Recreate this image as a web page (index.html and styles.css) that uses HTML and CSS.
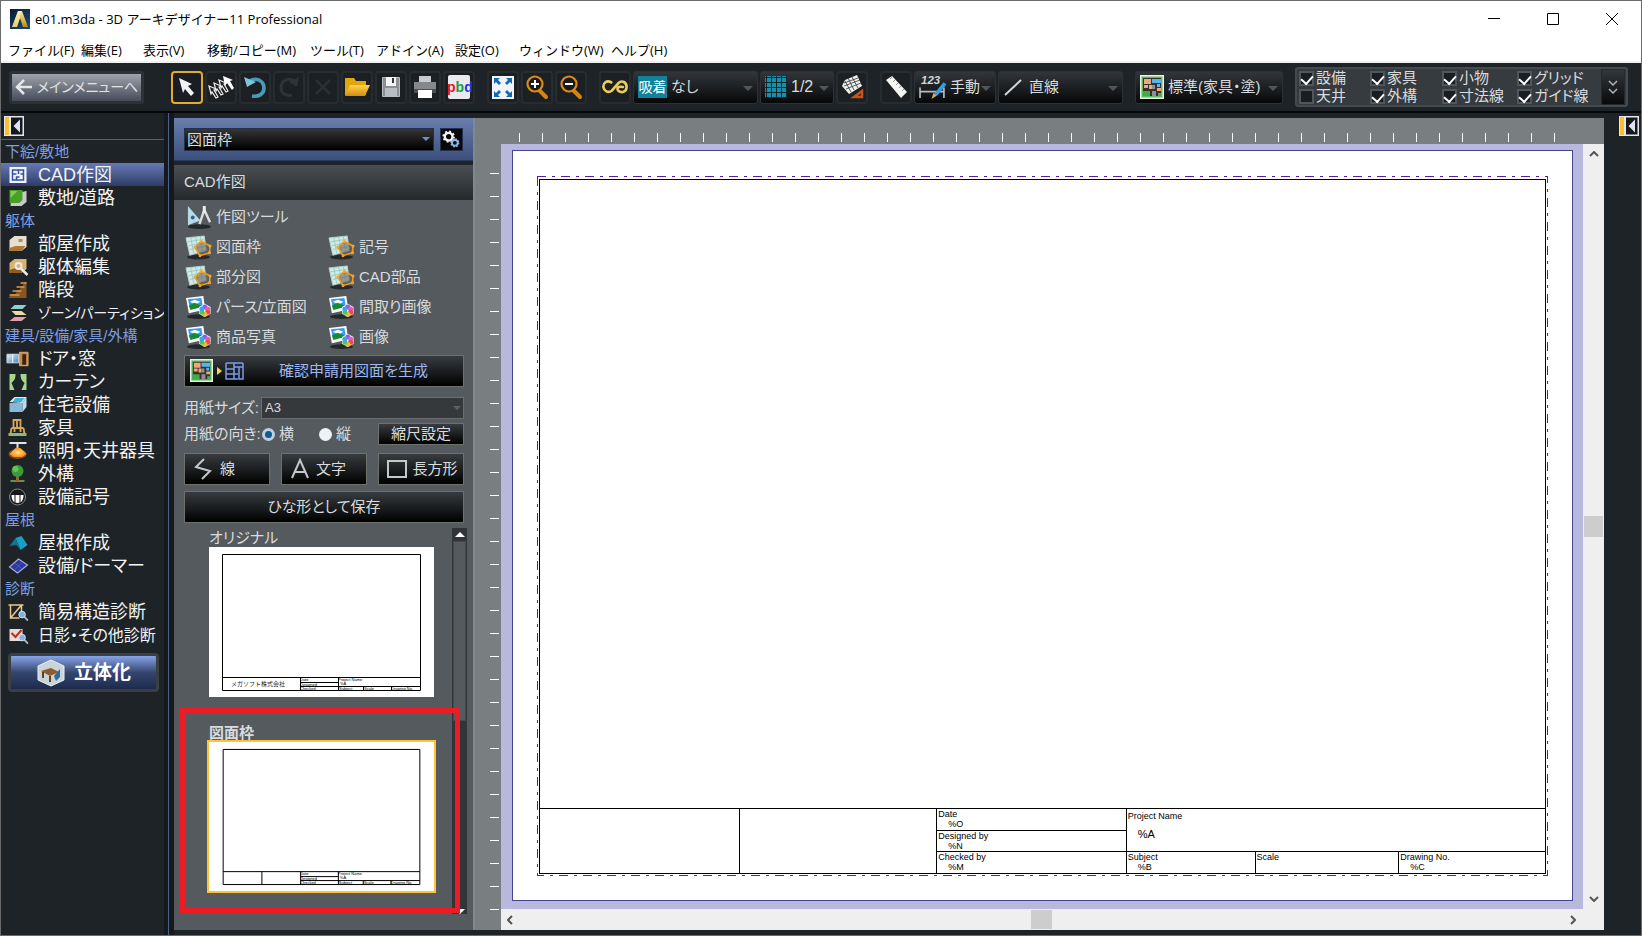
FILE: index.html
```html
<!DOCTYPE html>
<html lang="ja">
<head>
<meta charset="utf-8">
<title>e01.m3da - 3D アーキデザイナー11 Professional</title>
<link rel="stylesheet" href="styles.css">
</head>
<body>
<svg class="defs" aria-hidden="true">
  <defs>
    <linearGradient id="gold" x1="0" y1="0" x2="0" y2="1"><stop offset="0" stop-color="#fff0a0"/><stop offset="1" stop-color="#c08a10"/></linearGradient>
    <linearGradient id="navy" x1="0" y1="0" x2="1" y2="1"><stop offset="0" stop-color="#0a1c33"/><stop offset="1" stop-color="#1d4a78"/></linearGradient>
    <linearGradient id="folder" x1="0" y1="0" x2="0" y2="1"><stop offset="0" stop-color="#ffd34a"/><stop offset="1" stop-color="#d58c12"/></linearGradient>
    <linearGradient id="sky" x1="0" y1="0" x2="1" y2="1"><stop offset="0" stop-color="#e6f5ff"/><stop offset="1" stop-color="#3d86c4"/></linearGradient>
    <radialGradient id="lamp"><stop offset="0" stop-color="#ffe680"/><stop offset="1" stop-color="#ff8a1e"/></radialGradient>
    <symbol id="collapse" viewBox="0 0 20 20"><path fill="#e6e6ea" d="M0 0h20v20H0z"/><path fill="#fbc02d" d="M1 1h4v18H1z"/><path fill="#15181c" d="M7 1.500h11.500v17H7z"/><path fill="#dfe2f5" d="M16 3.500v13L9.500 10z"/></symbol>
    <symbol id="plan" viewBox="0 0 24 24"><path fill="#e8f4e4" d="M0 0h24v24H0z"/><path fill="#5cb860" d="M1.500 1.500h21v21h-21z"/><path fill="#3a302e" d="M3 3h18v18H3z"/><path fill="#f0a878" d="M4 4h7v5H4zm0 6h4v3H4zm5 0h3v4H9zm8 3h4v3h-4z"/><path fill="#58b4f0" d="M12 4h9v4h-9zm5 5h3v3h-3z"/><path fill="#3cb048" d="M3 16h7v5H3z"/><path fill="#8f9094" d="M12 10h3v4h-3zm0 6h4v5h-4z"/><path fill="#58a85c" d="M18 18h3v3h-3z"/></symbol>
    <symbol id="shape" viewBox="0 0 28 26"><ellipse cx="14" cy="23" rx="12" ry="2.500" fill="#25292c"/><path fill="#d0ebe6" stroke="#b4d0cb" d="M1 3l19-2 2 15-17 5z"/><path stroke="#8fc4bf" stroke-width=".8" fill="none" d="M3 7l16-2.500M4 11l16-3M5 15l16-3M6 3l3 16M11 2l3 15M16 2l2 15"/><path fill="#6a6256" fill-opacity=".6" stroke="#f09a18" stroke-width="1.600" d="M10 12.500l7-6 9 5-.5 7-10 3z"/><path fill="#ff8018" stroke="#ffc050" stroke-width=".6" d="M9 11.500h2v2H9zm7-6h2v2h-2zm9 5h2v2h-2zm-.5 7h2v2h-2zm-10 3h2v2h-2z"/></symbol>
    <symbol id="photo" viewBox="0 0 28 26"><ellipse cx="14" cy="22.500" rx="12" ry="2.500" fill="#25292c"/><path fill="#fff" d="M1 3l18-2 2 14-17 4z"/><path fill="#3a9ae8" d="M3 4.500l14-1.500 1.500 9-13 2.500z"/><path fill="#f0faff" d="M5 7l5-2 6 2-5 3z"/><path fill="#148a32" d="M4 11l6-3 7 3 .5 1.500L5.500 15.500z"/><path fill="#fff" d="M20.500 9l6 3.500v7l-6 3.500-6-3.500v-7z"/><circle cx="20.500" cy="12.500" r="2.600" fill="#8c5cf0"/><circle cx="23.500" cy="14.500" r="2.600" fill="#e25cc8"/><circle cx="23.500" cy="18" r="2.600" fill="#ee4a4a"/><circle cx="20.500" cy="20" r="2.600" fill="#f0b838"/><circle cx="17.500" cy="18" r="2.600" fill="#50c850"/><circle cx="17.500" cy="14.500" r="2.600" fill="#38a8e8"/></symbol>
    <symbol id="lens" viewBox="0 0 12 12"><path stroke="#b4bcc4" stroke-width="2" d="M7.500 7.500l4 4"/><circle cx="5" cy="5" r="3.600" fill="#7fb2e2" stroke="#dbe8f4"/></symbol>
    <symbol id="sheet-lines" viewBox="0 0 225 150"><path fill="none" stroke="#000" d="M13.500 7.500h198v136h-198zM13.500 130.500h198M91.500 130.500v13M129.500 130.500v13M154.500 139.500v4M182.500 139.500v4M91.500 135.500h38M91.500 139.500h120"/></symbol>
  </defs>
</svg>

<div class="window">
  <header class="titlebar">
    <svg class="app-icon" viewBox="0 0 20 20"><path fill="url(#navy)" d="M0 0h20v20H0z"/><path fill="url(#gold)" d="M8 2h4l6 16h-5l-3-9-3 9H2z"/><path fill="#fff6c0" d="M8 2h2v7l-3 9H2z" opacity=".6"/></svg>
    <h1 class="title">e01.m3da - 3D アーキデザイナー11 Professional</h1>
    <div class="window-buttons">
      <button aria-label="最小化"><svg viewBox="0 0 12 12"><path d="M0 5.500h12"/></svg></button>
      <button aria-label="最大化"><svg viewBox="0 0 12 12"><path d="M.5.500h11v11H.5z"/></svg></button>
      <button aria-label="閉じる"><svg viewBox="0 0 12 12"><path d="M0 0l12 12M12 0L0 12"/></svg></button>
    </div>
  </header>
  <nav class="menubar">
    <a href="#">ファイル(F)</a><a href="#">編集(E)</a><a href="#">表示(V)</a><a href="#">移動/コピー(M)</a><a href="#">ツール(T)</a><a href="#">アドイン(A)</a><a href="#">設定(O)</a><a href="#">ウィンドウ(W)</a><a href="#">ヘルプ(H)</a>
  </nav>

  <div class="toolbar">
    <button class="main-menu"><svg viewBox="0 0 18 18"><path d="M17 9H2M9 2L2 9l7 7"/></svg>メインメニューへ</button>
    <div class="tool-group">
      <button class="tool active" aria-label="選択"><svg viewBox="0 0 26 26"><path fill="#f2f2f2" d="M5 4l13 6-4 2 6 7-3 3-6-7-2 4z"/></svg></button>
      <button class="tool" aria-label="複数選択"><svg viewBox="0 0 26 26"><g fill="#222" stroke="#eee" stroke-width="1.200"><path d="M1 12l7 3-2 1 4 7-2 1-4-6-1 2z"/><path d="M6 9l7 3-2 1 4 7-2 1-4-6-1 2z"/><path d="M11 6l7 3-2 1 4 7-2 1-4-6-1 2z"/></g><path fill="#fff" d="M15 2l10 4-3 1 4 7-2 2-5-7-2 3z"/></svg></button>
      <button class="tool" aria-label="元に戻す"><svg viewBox="0 0 26 26"><path fill="none" stroke="#4a9ab8" stroke-width="3.600" d="M6 8c8-6 16-1 16 6 0 6-5 9-12 8"/><path fill="#7cc4dc" d="M2 3l3 10 9-5z"/></svg></button>
      <button class="tool faint" aria-label="やり直し"><svg viewBox="0 0 26 26"><path fill="none" stroke="#2d3337" stroke-width="3" d="M20 8c-8-6-15-1-15 6 0 6 5 8 11 7"/><path fill="#2d3337" d="M23 3l-2 10-8-5z"/></svg></button>
      <button class="tool faint" aria-label="削除"><svg viewBox="0 0 26 26"><path stroke="#2a3034" stroke-width="2.500" d="M6 6l14 14M20 6L6 20"/></svg></button>
      <button class="tool" aria-label="開く"><svg viewBox="0 0 26 26"><path fill="#e2a60e" d="M1 4h9l2 3h10v14H1z"/><path fill="url(#folder)" d="M6 11h20l-5 11H1z"/></svg></button>
      <button class="tool" aria-label="保存"><svg viewBox="0 0 26 26"><path fill="#8c9095" stroke="#b8bbbe" d="M4.500 3.500h17v19h-17z"/><path fill="#f4f4f4" d="M8 3h10v9H8z"/><path fill="#333" d="M14 4h2v5h-2z"/><path fill="#b9bcc0" d="M7 14h12v8H7z"/></svg></button>
      <button class="tool" aria-label="印刷"><svg viewBox="0 0 26 26"><path fill="#c8cace" d="M7 2h12v7H7z"/><path fill="#85898e" d="M2 8h22v8H2z"/><path fill="#4c5054" d="M2 15h22v4H2z"/><path fill="#fff" d="M6 16h14v8H6z"/></svg></button>
      <button class="tool" aria-label="pbd"><svg viewBox="0 0 26 26"><rect x="2" y="1" width="22" height="24" rx="2" fill="#e9e9ef"/><text class="pbd" x="1" y="18"><tspan fill="#d81828">p</tspan><tspan fill="#18a038">b</tspan><tspan fill="#2434d8">d</tspan></text></svg></button>
    </div>
    <div class="tool-group">
      <button class="tool" aria-label="全体表示"><svg viewBox="0 0 26 26"><path fill="#f2f5f8" d="M2 2h22v23H2z"/><path fill="#1768b4" d="M4 4h6L8 6l3 3-2 2-3-3-2 2zM22 4v6l-2-2-3 3-2-2 3-3-2-2zM4 23v-6l2 2 3-3 2 2-3 3 2 2zM22 23h-6l2-2-3-3 2-2 3 3 2-2z"/></svg></button>
      <button class="tool" aria-label="拡大"><svg viewBox="0 0 26 26"><path stroke="#d88410" stroke-width="4" stroke-linecap="round" d="M16 17l6 6"/><circle cx="11" cy="10" r="7.500" fill="#1c1a18" stroke="#dc8a18" stroke-width="2.200"/><path stroke="#fff" stroke-width="2" d="M7 10h8M11 6v8"/></svg></button>
      <button class="tool" aria-label="縮小"><svg viewBox="0 0 26 26"><path stroke="#d88410" stroke-width="4" stroke-linecap="round" d="M16 17l6 6"/><circle cx="11" cy="10" r="7.500" fill="#1c1a18" stroke="#dc8a18" stroke-width="2.200"/><path stroke="#fff" stroke-width="2" d="M7 10h8"/></svg></button>
    </div>
    <div class="tool-group">
      <button class="tool" aria-label="連続"><svg viewBox="0 0 28 26"><path fill="none" stroke="#eccb5a" stroke-width="2.800" stroke-linecap="round" d="M10 8C5 5 1 9 1.500 13s5 7 9 4l7-8c4-4 9-1 9 4s-5 7-9 4c-2-3 0-5 5-4"/></svg></button>
      <label class="drop drop-wide"><span class="snap">吸着</span><select aria-label="吸着"><option>なし</option></select></label>
      <label class="drop drop-grid"><svg viewBox="0 0 22 22"><path fill="#1690aa" d="M0 0h22v22H0z"/><path stroke="#14262c" d="M0 1.500h22M0 6.500h22M0 11.500h22M0 16.500h22M0 21.500h22M1.500 0v22M6.500 0v22M11.500 0v22M16.500 0v22M21.500 0v22"/></svg><select aria-label="グリッド"><option>1/2</option></select></label>
      <button class="tool" aria-label="グリッド設定"><svg viewBox="0 0 26 26"><path fill="#eef0f0" d="M6 6l12-5 5 11-13 8-7-8z"/><path stroke="#333" stroke-width=".8" d="M5 9l14-5M5 12l16-6M7 15l15-6M9 4l6 12M13 3l6 11M6 7l6 11" fill="none"/><path fill="none" stroke="#c8541c" stroke-width="2.500" d="M15 23h8v-6z"/></svg></button>
    </div>
    <div class="tool-group">
      <button class="tool" aria-label="メジャー"><svg viewBox="0 0 26 26"><path fill="#f4f4f0" d="M3 6l6-4 15 16-6 6z"/><path stroke="#999" d="M9 3l-2 2M12 6l-2 2M15 9l-2 2M18 12l-2 2M21 15l-2 2"/></svg></button>
      <label class="drop drop-dim"><svg viewBox="0 0 26 26"><text class="dim-num" x="2" y="10">123</text><path stroke="#b8bcc0" stroke-width="1.600" d="M1 13v10M24 13v10M1 17h23"/><path stroke="#30a0e8" stroke-width="3.500" d="M25 9l-9 11"/><path fill="#d8b060" d="M14 18l3 3-5 3z"/></svg><select aria-label="寸法"><option>手動</option></select></label>
      <label class="drop drop-wide"><svg viewBox="0 0 22 22"><path stroke="#d4d6d8" stroke-width="2" d="M2 19L18 4"/></svg><select aria-label="線種"><option>直線</option></select></label>
    </div>
    <div class="tool-group">
      <label class="drop drop-plan"><svg viewBox="0 0 24 24"><use href="#plan"/></svg><select aria-label="表示"><option>標準(家具・塗)</option></select></label>
    </div>
    <div class="layers">
      <label><input type="checkbox" checked>設備</label><label><input type="checkbox" checked>家具</label><label><input type="checkbox" checked>小物</label><label><input type="checkbox" checked>グリッド</label>
      <label><input type="checkbox">天井</label><label><input type="checkbox" checked>外構</label><label><input type="checkbox" checked>寸法線</label><label><input type="checkbox" checked>ガイド線</label>
      <button class="more" aria-label="もっと"><svg viewBox="0 0 12 16"><path d="M2 2l4 4 4-4M2 10l4 4 4-4"/></svg></button>
    </div>
  </div>

  <main class="workspace">
    <nav class="sidebar">
      <div class="side-top"><button class="collapse" aria-label="折りたたむ"><svg viewBox="0 0 20 20"><use href="#collapse"/></svg></button></div>
      <h2>下絵/敷地</h2>
      <a class="current" href="#"><svg viewBox="0 0 22 20"><path fill="#f0f3ff" d="M3 2h17v16H3z"/><path fill="none" stroke="#34509c" stroke-width="1.500" d="M6 5h11v10H6zM6 9h4M12 5v4M10 15v-3h3M14 9h3"/></svg>CAD作図</a>
      <a href="#"><svg viewBox="0 0 22 20"><path fill="#c8cac8" d="M5 6l15-3v11l-5 4H4z"/><path fill="#48a028" d="M3 2h13v10l-3 3H3z"/><path fill="#82cc50" d="M4 3h7l-7 7z"/></svg>敷地/道路</a>
      <h2>躯体</h2>
      <a href="#"><svg viewBox="0 0 22 20"><path fill="#e8dfce" d="M3 6l5-4h12v11l-5 4H3z"/><path fill="#b07838" d="M3 14l6-2h10l-4 5H3z"/><path fill="#9b9283" d="M12 5h4v3h-4z"/></svg>部屋作成</a>
      <a href="#"><svg viewBox="0 0 22 20"><path fill="#d6b46c" d="M3 6l5-4h12v10l-5 4H3z"/><path fill="#8f5c24" d="M3 13l6-2h8l-2 5H3z"/><path stroke="#e9ebee" stroke-width="2.500" d="M14 11l7 7"/><circle cx="12" cy="9" r="3" fill="none" stroke="#e9ebee" stroke-width="2"/></svg>躯体編集</a>
      <a href="#"><svg viewBox="0 0 22 20"><path fill="#8a5520" d="M2 18l3-4h4l2-4h2l2-4h1l2-4h2v16z"/><path stroke="#d69b4e" stroke-width="1.500" d="M3 15h10M6 11h9M10 7h8M14 3h6"/></svg>階段</a>
      <a class="small" href="#"><svg viewBox="0 0 22 20"><path fill="#8fcfd0" d="M8 2h12l-4 4H4z"/><path fill="#f0d898" d="M5 8h10l5 4H9z"/><path fill="#e0a0b0" d="M8 14h12l-5 4H3z"/></svg>ゾーン/パーティション</a>
      <h2>建具/設備/家具/外構</h2>
      <a href="#"><svg viewBox="0 0 24 20"><path fill="url(#sky)" stroke="#cfd8e0" d="M1 5h12v9H1z"/><path stroke="#fff" d="M7 5v9"/><path fill="#c88a48" stroke="#e0b078" d="M14 3h9v14h-9z"/><path fill="#39240f" d="M17 5h4v11h-4z"/></svg>ドア・窓</a>
      <a href="#"><svg viewBox="0 0 22 20"><path fill="#a6d68c" d="M3 2h6c0 5-1 6-4 9l3 7H3zM20 2h-6c0 5 1 6 4 9l-3 7h5z"/></svg>カーテン</a>
      <a href="#"><svg viewBox="0 0 22 20"><path fill="#d8eef8" d="M3 7l5-5h12l-4 6z"/><path fill="#38b4e0" d="M6 7l3-4h9l-3 4z"/><path fill="#88b8d8" d="M3 8h13v9H3z"/><path fill="#bcdcec" d="M16 8l4-6v10l-4 5z"/></svg>住宅設備</a>
      <a href="#"><svg viewBox="0 0 22 20"><path fill="#8eb878" d="M2 15h18v3H2z"/><path fill="none" stroke="#daa55c" stroke-width="1.800" d="M7 10V2h7v8M5 10h12M5 10l-1 6M17 10l1 6M10.500 2v8M8 11v3M14 11v3"/></svg>家具</a>
      <a href="#"><svg viewBox="0 0 22 20"><path stroke="#e0e0e0" stroke-width="2" d="M3 2h17M11 2v6"/><ellipse cx="11" cy="13" rx="9" ry="5" fill="#8a4c10"/><path fill="url(#lamp)" d="M3 13l6-6h5l6 6-4 3H7z"/></svg>照明・天井器具</a>
      <a href="#"><svg viewBox="0 0 22 20"><path fill="#6e8e4a" d="M4 16h14v2H4z"/><path stroke="#98643a" stroke-width="3" d="M11 10v7"/><circle cx="11" cy="7" r="6" fill="#3a9c38"/><circle cx="9" cy="5" r="3" fill="#6cc050"/></svg>外構</a>
      <a href="#"><svg viewBox="0 0 22 20"><circle cx="11" cy="10" r="8" fill="#16181a" stroke="#888"/><path fill="#fff" d="M5 8h12c0 5-2 8-6 8s-6-3-6-8z"/><path stroke="#16181a" d="M8.500 8v9M13.500 8v9"/></svg>設備記号</a>
      <h2>屋根</h2>
      <a href="#"><svg viewBox="0 0 22 20"><path fill="#18a0c4" d="M9 5l6-2 6 9-7 5z"/><path fill="#107494" d="M9 5l5 12-4-5-7 1z"/></svg>屋根作成</a>
      <a href="#"><svg viewBox="0 0 22 20"><path fill="#2c38a0" stroke="#a4acd8" stroke-width="1.200" d="M12 3l9 6-10 8-8-6z"/><path stroke="#5060c8" stroke-width=".8" d="M8 7l8 6M16 6l-8 8"/></svg>設備/ドーマー</a>
      <h2>診断</h2>
      <a href="#"><svg viewBox="0 0 22 20"><path fill="none" stroke="#eac890" stroke-width="1.500" d="M2 3h15M4 3v13h9M15 3v9M15 3L4 16"/><use href="#lens" x="11" y="8" width="11" height="11"/></svg>簡易構造診断</a>
      <a class="medium" href="#"><svg viewBox="0 0 22 20"><path fill="#e8dcd8" d="M3 4h13v12H3z"/><path stroke="#b83020" stroke-width="2" fill="none" d="M5 8l4 4 6-7"/><use href="#lens" x="11" y="8" width="11" height="11"/></svg>日影・その他診断</a>
      <button class="solid"><svg viewBox="0 0 30 28"><path fill="#c9d3d8" stroke="#eef2f4" d="M15 1l13 6v14l-13 6-13-6V7z"/><path fill="#8a5c30" d="M5 12l10-3 8 4-9 4z"/><path stroke="#604020" stroke-width="2" d="M7 13v6M14 17v6"/><path fill="#2c6ca0" d="M18 17l6-7v8l-4 4z"/></svg>立体化</button>
    </nav>
    <div class="splitter"></div>

    <section class="panel">
      <div class="panel-head">
        <select class="category" aria-label="分類"><option>図面枠</option></select>
        <button class="gear" aria-label="設定"><svg viewBox="0 0 22 22"><circle cx="8" cy="8" r="4" fill="none" stroke="#f2f2f2" stroke-width="2.500"/><circle cx="8" cy="8" r="5.500" fill="none" stroke="#f2f2f2" stroke-width="2" stroke-dasharray="2 2.300"/><circle cx="14.500" cy="14.500" r="3" fill="none" stroke="#8cb8e4" stroke-width="2"/><circle cx="14.500" cy="14.500" r="4" fill="none" stroke="#8cb8e4" stroke-width="1.600" stroke-dasharray="1.600 1.540"/></svg></button>
      </div>
      <h2 class="panel-title">CAD作図</h2>
      <div class="links">
        <a class="full" href="#"><svg viewBox="0 0 28 26"><ellipse cx="15" cy="22.500" rx="12" ry="2.500" fill="#25292c"/><path fill="#b4daee" d="M3 1v20l13-5z"/><circle cx="8" cy="13" r="2" fill="#3c6078"/><path fill="none" stroke="#dcdcdc" stroke-width="2.500" d="M20 5l-5 15M20 5l6 13"/><path stroke="#eee" stroke-width="3" d="M20 1v7"/></svg>作図ツール</a>
        <a href="#"><svg viewBox="0 0 28 26"><use href="#shape"/></svg>図面枠</a><a href="#"><svg viewBox="0 0 28 26"><use href="#shape"/></svg>記号</a>
        <a href="#"><svg viewBox="0 0 28 26"><use href="#shape"/></svg>部分図</a><a href="#"><svg viewBox="0 0 28 26"><use href="#shape"/></svg>CAD部品</a>
        <a href="#"><svg viewBox="0 0 28 26"><use href="#photo"/></svg>パース/立面図</a><a href="#"><svg viewBox="0 0 28 26"><use href="#photo"/></svg>間取り画像</a>
        <a href="#"><svg viewBox="0 0 28 26"><use href="#photo"/></svg>商品写真</a><a href="#"><svg viewBox="0 0 28 26"><use href="#photo"/></svg>画像</a>
      </div>
      <div class="form">
        <button class="dark generate"><svg viewBox="0 0 54 24"><use href="#plan" width="23" height="23"/><path fill="#f0d840" d="M27 8l5 4-5 4z"/><path fill="none" stroke="#7c9ce8" stroke-width="1.500" d="M36 4h17M36 4v16h12M36 10h8M36 15h12M44 4v16M44 8h9M49 8v12h4V4"/></svg><span>確認申請用図面を生成</span></button>
        <div class="row size-row"><label for="paper">用紙サイズ:</label><div class="paper-box"><select id="paper" disabled><option>A3</option></select></div></div>
        <div class="row direction"><span>用紙の向き:</span><label><input type="radio" name="dir" checked>横</label><label><input type="radio" name="dir">縦</label><button class="dark scale">縮尺設定</button></div>
        <div class="row shapes">
          <button class="dark"><svg viewBox="0 0 20 22"><path d="M11 1L3 9l14 4-8 8"/></svg><span>線</span></button>
          <button class="dark"><svg viewBox="0 0 20 22"><path d="M2 20L10 2l8 18M5 14h10"/></svg><span>文字</span></button>
          <button class="dark"><svg viewBox="0 0 20 22"><path d="M1 3h18v16H1z"/></svg><span>長方形</span></button>
        </div>
        <button class="dark save">ひな形として保存</button>
      </div>
      <div class="templates">
        <div class="template-list">
          <figure class="template">
            <figcaption>オリジナル</figcaption>
            <svg class="sheet" viewBox="0 0 225 150"><use href="#sheet-lines"/><text class="company" x="22" y="139">メガソフト株式会社</text><g class="micro"><text x="91" y="134">Date</text><text x="91" y="139">Designed</text><text x="91" y="143">Checked</text><text x="129" y="134">Project Name</text><text x="131" y="138">%A</text><text x="130" y="143">Subject</text><text x="155" y="143">Scale</text><text x="182" y="143">Drawing No.</text></g></svg>
          </figure>
          <figure class="template chosen">
            <figcaption>図面枠</figcaption>
            <svg class="sheet" viewBox="0 0 225 150"><use href="#sheet-lines"/><path stroke="#000" d="M52.500 130.500v13"/><g class="micro"><text x="91" y="134">Date</text><text x="91" y="139">Designed</text><text x="91" y="143">Checked</text><text x="129" y="134">Project Name</text><text x="131" y="138">%A</text><text x="130" y="143">Subject</text><text x="155" y="143">Scale</text><text x="182" y="143">Drawing No.</text></g></svg>
          </figure>
        </div>
        <div class="list-scroll"><i class="up"></i><b></b><i class="down"></i></div>
        <div class="highlight"></div>
      </div>
    </section>

    <section class="canvas">
      <div class="ruler-top"></div>
      <div class="ruler-left"></div>
      <div class="desk">
        <div class="page">
          <div class="frame">
            <svg class="margin-line"><rect width="100%" height="100%"/></svg>
            <div class="drawing"></div>
            <div class="title-block">
              <div class="cell tall"></div>
              <div class="cell tall"></div>
              <div class="cell">Date<span>%O</span></div>
              <div class="cell project">Project Name<span>%A</span></div>
              <div class="cell">Designed by<span>%N</span></div>
              <div class="cell">Checked by<span>%M</span></div>
              <div class="cell">Subject<span>%B</span></div>
              <div class="cell">Scale</div>
              <div class="cell">Drawing No.<span>%C</span></div>
            </div>
          </div>
        </div>
      </div>
      <div class="vscroll"><svg viewBox="0 0 10 6"><path d="M1 5l4-4 4 4"/></svg><b></b><svg viewBox="0 0 10 6"><path d="M1 1l4 4 4-4"/></svg></div>
      <div class="hscroll"><svg viewBox="0 0 6 10"><path d="M5 1L1 5l4 4"/></svg><b></b><svg viewBox="0 0 6 10"><path d="M1 1l4 4-4 4"/></svg></div>
    </section>
    <aside class="right-strip"><button class="collapse" aria-label="開く"><svg viewBox="0 0 20 20"><use href="#collapse"/></svg></button></aside>
  </main>
</div>
</body>
</html>
```
FILE: styles.css
```css
* { box-sizing: border-box; }
body {
  margin: 0;
  background: #1e2327;
  color: #d8dcdf;
  font: 15px/20px "Liberation Sans", "Noto Sans CJK JP", sans-serif;
  font-feature-settings: "palt";
}
button, select, input { font: inherit; color: inherit; font-feature-settings: inherit; margin: 0; }
button { padding: 0; border: 0; background: none; }
select { appearance: none; border: 0; background: none; padding: 0; opacity: 1; }
a { color: inherit; text-decoration: none; }
h1, h2, figure { margin: 0; font-weight: normal; }
svg { display: block; flex: none; }
.defs { position: absolute; width: 0; height: 0; }

.window { display: flex; flex-direction: column; min-height: 100vh; border: 1px solid #6b6b6b; }

/* title and menu */
.titlebar { display: flex; align-items: center; height: 36px; padding-left: 9px; gap: 5px; background: #fff; color: #000; }
.app-icon { width: 20px; height: 20px; }
.title { font: 13px/20px "Open Sans", "Noto Sans CJK JP", sans-serif; }
.window-buttons { display: flex; margin-left: auto; }
.window-buttons button { display: grid; place-items: center; width: 59px; height: 36px; }
.window-buttons svg { width: 12px; height: 12px; fill: none; stroke: #000; }
.menubar {
  display: grid; grid-template-columns: 73px 62px 64px 103px 66px 79px 64px 92px auto;
  height: 26px; padding: 3px 0 0 7px; border-bottom: 2px solid #f0f0f0; background: #fff; color: #000;
  font: 13px/20px "Open Sans", "Noto Sans CJK JP", sans-serif; white-space: nowrap;
}

/* toolbar */
.toolbar { display: flex; align-items: center; height: 50px; padding: 0 0 0 8px; gap: 12px; border-bottom: 2px solid #060708; white-space: nowrap; }
.main-menu {
  display: flex; align-items: center; justify-content: center; gap: 4px; width: 135px; height: 33px; margin-right: 15px;
  border: 3px solid #2d3236; border-radius: 3px; background: linear-gradient(#9ea3ac, #454c58); color: #e0e3e8; font-size: 14px;
}
.main-menu svg { width: 18px; height: 18px; fill: none; stroke: #e4e6ea; stroke-width: 2.500; }
.tool-group { display: flex; gap: 2px; }
.tool { display: grid; place-items: center; width: 32px; height: 33px; border: 2px solid #272c30; border-radius: 4px; background: #1c2023; }
.tool svg { width: 26px; height: 26px; }
.tool.active { border-color: #e3aa2e; background: #1a1e24; }
.pbd { font: bold 14px "Liberation Sans", sans-serif; }
.dim-num { font: italic bold 11px "Liberation Sans", sans-serif; fill: #d4d6d8; }
.drop {
  position: relative; display: flex; align-items: center; gap: 4px; height: 33px; padding: 0 4px;
  border: 1px solid #2c3135; border-radius: 3px; background: linear-gradient(#32363a, #070809);
}
.drop::after { content: ""; position: absolute; right: 4px; top: 14px; border: 5px solid transparent; border-top-color: #50555a; }
.drop select { flex: 1; min-width: 0; }
.drop svg { width: 22px; height: 22px; }
.drop-wide { width: 125px; }
.drop-grid { width: 74px; }
.drop-grid select { font-size: 16px; }
.drop-dim { width: 82px; padding-right: 0; }
.drop-dim svg { width: 27px; height: 27px; }
.drop-plan { width: 148px; }
.drop-plan svg { width: 24px; height: 24px; }
.snap { width: 29px; height: 22px; background: #12829a; color: #fff; font-size: 14px; line-height: 22px; text-align: center; }
.layers {
  display: grid; grid-template-columns: 71px 72px 75px 84px 24px; grid-template-rows: 18px 18px; align-content: center;
  width: 333px; height: 40px; padding-left: 2px; border: 2px solid #454a4e; border-radius: 3px; background: #363b3f;
}
.layers label { display: flex; align-items: center; gap: 2px; line-height: 18px; }
.layers input { display: flex; align-items: flex-start; justify-content: center; appearance: none; width: 15px; height: 15px; border: 2px solid #50565a; background: #1a1e22; }
.layers input:checked::after { content: ""; flex: none; width: 6px; height: 9px; border: solid #fff; border-width: 0 2px 2px 0; transform: rotate(42deg); }
.more { display: grid; place-items: center; grid-area: 1 / 5 / 3 / 6; border: 1px solid #25292c; background: linear-gradient(#33373b, #08090a); }
.more svg { width: 12px; height: 16px; fill: none; stroke: #b0b4b8; stroke-width: 1.500; }

/* workspace */
.workspace { display: flex; flex: 1; }
.collapse, .collapse svg { width: 20px; height: 20px; }
.sidebar { width: 163px; font-size: 18px; white-space: nowrap; }
.side-top { height: 27px; padding: 3px; border-bottom: 1px solid #5b5f63; }
.sidebar h2 { height: 23px; padding-left: 4px; font-size: 15px; line-height: 23px; color: #7d9ee0; }
.sidebar a { display: flex; align-items: center; gap: 9px; height: 23px; padding: 1px 0 0 5px; line-height: 23px; color: #f2f3f4; }
.sidebar a svg { width: 23px; height: 20px; }
.sidebar .small { font-size: 14px; }
.sidebar .medium { font-size: 16px; }
.sidebar .current { background: linear-gradient(#6679b4, #2e3d66); }
.solid {
  display: flex; align-items: center; justify-content: center; gap: 8px; width: 151px; height: 39px; margin: 7px;
  border: 3px solid #3a3f44; border-radius: 4px; background: linear-gradient(#86a4e8, #35466e 50%, #1d2a4e); color: #fff; font-size: 19px; font-weight: bold;
}
.solid svg { width: 30px; height: 28px; }
.splitter { width: 10px; border: solid #15191c; border-width: 0 5px 0 4px; background: #49618e; }

/* panel */
.panel { display: flex; flex-direction: column; width: 301px; margin: 5px 0; border-right: 2px solid #83888e; background: #555a5e; }
.panel-head { position: relative; display: flex; gap: 6px; height: 43px; padding: 10px 10px 0; border-bottom: 1px solid #2a3a5e; background: linear-gradient(#6a7fae, #3c4f7c); }
.panel-head::after { content: ""; position: absolute; right: 43px; top: 19px; border: 4px solid transparent; border-top-color: #6c90cc; }
.category { flex: 1; height: 23px; padding-left: 2px; border: 1px solid #25304c; background: linear-gradient(#353535, #000); }
.gear { width: 23px; height: 23px; border: 1px solid #25304c; background: #080808; }
.gear svg { width: 21px; height: 21px; }
.panel-title { height: 39px; padding: 3px 0 0 10px; border-top: 4px solid #1e2327; background: linear-gradient(#4a4f53, #25292c); font-size: 15px; line-height: 27px; }
.links { display: grid; grid-template-columns: 143px 1fr; grid-auto-rows: 30px; padding: 2px 0 0 11px; }
.links a { display: flex; align-items: center; gap: 4px; }
.links .full { grid-column: 1 / 3; }
.links svg { width: 27px; height: 25px; }
.form { display: flex; flex-direction: column; padding: 3px 9px 5px 10px; }
.dark { display: flex; align-items: center; justify-content: center; height: 31px; border: 1px solid #70716b; background: linear-gradient(#383c40, #000); }
.generate { justify-content: flex-start; height: 32px; padding-left: 5px; color: #9db8f0; }
.generate svg { width: 54px; height: 24px; }
.generate span { flex: 1; text-align: center; }
.row { display: flex; align-items: center; }
.size-row { margin-top: 10px; gap: 8px; }
.size-row label { width: 69px; white-space: nowrap; }
.paper-box { position: relative; display: flex; flex: 1; }
.paper-box::after { content: ""; position: absolute; right: 3px; top: 9px; border: 4px solid transparent; border-top-color: #5c6165; }
.paper-box select { flex: 1; height: 22px; padding-left: 3px; border: 1px solid #6a6e71; background: #36393c; font-size: 13px; }
.direction { height: 22px; margin-top: 4px; white-space: nowrap; }
.direction > span { width: 78px; }
.direction label { display: flex; align-items: center; gap: 4px; width: 57px; }
.direction input { appearance: none; width: 13px; height: 13px; border-radius: 50%; background: #eef1f6; }
.direction input:checked { border: 3px solid #c0cee0; background: #0c5c92; }
.scale { width: 86px; height: 22px; margin-left: auto; }
.shapes { justify-content: space-between; margin: 8px 0 6px; }
.shapes .dark { width: 86px; height: 32px; justify-content: flex-start; padding-left: 8px; }
.shapes svg { width: 20px; height: 22px; fill: none; stroke: #c4c8ca; stroke-width: 2; }
.shapes span { flex: 1; text-align: center; }
.shapes .dark:first-child span { padding-right: 27px; }
.shapes .dark:nth-child(2) span { padding-right: 14px; }
.save { height: 32px; }
.templates { position: relative; display: flex; flex: 1; padding-right: 6px; }
.template-list { flex: 1; padding-left: 33px; }
.template { width: 229px; margin-bottom: 24px; }
.template figcaption { height: 18px; padding: 1px 2px 0; line-height: 18px; }
.template .sheet { width: 229px; height: 153px; padding: 1px 2px 2px; background: content-box #fff; }
.template.chosen figcaption { height: 17px; font-weight: bold; line-height: 17px; }
.template.chosen .sheet { border: 2px solid #ffc23a; padding: 0; background: #fff; }
.company { font: 6px "Noto Sans CJK JP", sans-serif; fill: #222; }
.micro { font: 4px "Liberation Sans", sans-serif; }
.list-scroll { display: flex; flex-direction: column; align-items: center; width: 15px; height: 386px; background: #313539; }
.list-scroll b { width: 13px; height: 180px; border: 1px solid #44494d; background: #555a5e; }
.list-scroll i { width: 0; height: 0; border: 5px solid transparent; }
.list-scroll .up { margin-bottom: 4px; border-bottom-color: #fff; border-top-width: 4px; }
.list-scroll .down { margin-top: auto; border-top-color: #fff; border-bottom-width: 0; }
.highlight { position: absolute; left: 6px; right: 13px; top: 180px; height: 205px; border: 5px solid #ed1c24; }

/* canvas */
.canvas { display: grid; flex: 1; grid-template: 26px 1fr 21px / 26px 1fr 21px; margin: 5px 0; background: #797e81; }
.ruler-top { grid-area: 1 / 2 / 2 / 4; margin: 15px 48px 2px 18px; background: repeating-linear-gradient(90deg, #fff 0 1px, transparent 1px 23px); }
.ruler-left { grid-area: 2 / 1 / 4 / 2; margin: 29px 2px 20px 15px; background: repeating-linear-gradient(#fff 0 1px, transparent 1px 23px); }
.desk { display: flex; grid-area: 2 / 2; padding: 6px 10px 8px 11px; background: #b8b8de; }
.page { display: flex; flex: 1; padding: 28px 26px 26px 26px; border: 1px solid #45458e; background: #fff; }
.frame { position: relative; display: flex; flex: 1; flex-direction: column; border: 1px solid #000; }
.margin-line { position: absolute; left: -3px; top: -4px; width: calc(100% + 5px); height: calc(100% + 6px); overflow: visible; }
.margin-line rect { fill: none; stroke: #5c1ca0; stroke-dasharray: 9 6 3 6; shape-rendering: crispEdges; }
.drawing { flex: 1; }
.title-block { display: grid; grid-template: 22px 21px 22px / 199fr 198fr 190fr 129fr 144fr 147fr; color: #000; font: 9px/10px "Liberation Sans", sans-serif; }
.cell { border: solid #000; border-width: 1px 0 0 1px; padding-left: 1px; }
.cell:first-child { border-left: 0; }
.cell span { display: block; padding-left: 10px; }
.tall { grid-row: 1 / 4; }
.project { grid-area: 1 / 4 / 3 / 7; padding-top: 2px; }
.project span { padding-top: 8px; font-size: 11px; }
.vscroll, .hscroll { display: flex; align-items: center; justify-content: space-between; background: #efefef; }
.vscroll { grid-area: 2 / 3; flex-direction: column; padding: 7px 0; }
.hscroll { grid-area: 3 / 2 / 4 / 4; padding: 0 28px 0 6px; }
.vscroll b { width: 19px; height: 21px; background: #cdcdcd; }
.hscroll b { width: 21px; height: 19px; background: #cdcdcd; }
.vscroll svg { width: 10px; height: 6px; }
.hscroll svg { width: 6px; height: 10px; }
.vscroll svg, .hscroll svg { fill: none; stroke: #555; stroke-width: 2; }
.right-strip { width: 37px; padding: 3px 0 0 15px; }
```
